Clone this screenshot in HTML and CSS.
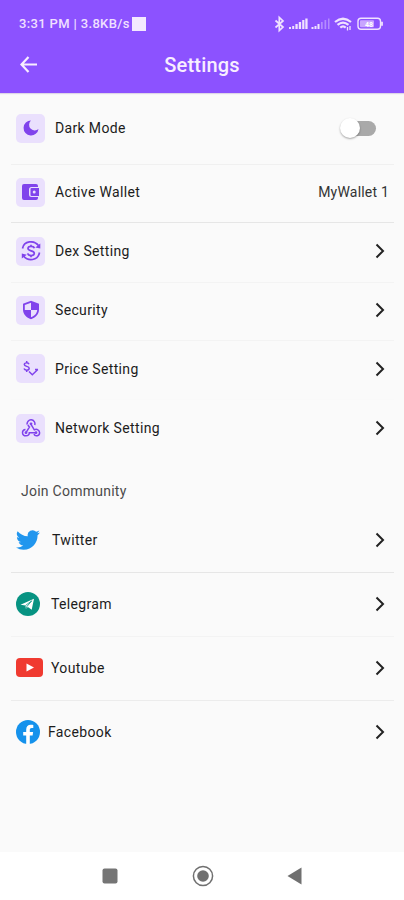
FILE: index.html
```html
<!DOCTYPE html>
<html lang="en">
<head>
    <meta charset="UTF-8">
    <meta name="viewport" content="width=device-width, initial-scale=1.0">
    <title>Settings</title>
    <link rel="stylesheet" href="styles.css">
</head>
<body>

    <div class="header">
        <div class="status-bar">
            <span class="time">3:31 PM | 3.8KB/s</span>
            <span class="square"></span>
            <svg class="status-icons" width="110" height="18" viewBox="0 0 110 18">
                <g fill="none" stroke="#f0e2ff" stroke-width="1.7">
                    <path d="M1.500 5.500l7.500 6.500-3.700 3.500V2.500L9 6l-7.500 6.500"/>
                </g>
                <g fill="#f0e2ff">
                    <path d="M15 12h2v2h-2zM18.200 11h2v3h-2zM21.400 9h2.300v5h-2.300zM24.800 7h2.300v7h-2.300zM28.200 5h2.200v9h-2.200zM31.300 3.500h2.300V14h-2.300z"/>
                    <path d="M37.500 12h2v2h-2zM40.500 11h2v3h-2zM43.500 9h2v5h-2z"/>
                    <path opacity=".4" d="M47 7h1.700v7H47zM50.500 5h1.700v9h-1.700zM54 3.500h1.500V14H54z"/>
                </g>
                <g fill="none" stroke="#f0e2ff" stroke-width="2.2">
                    <path d="M61 7q8-6.500 16 0M63.500 9.800q5.500-4.500 11 0M66.300 12.600q2.700-2.400 5.400 0"/>
                    <path d="M73.500 12v3.500M76 11v4" stroke-width="1.300"/>
                </g>
                <rect x="84" y="3.200" width="22.500" height="11" rx="3" fill="none" stroke="#f0e2ff" stroke-width="1.400"/>
                <path d="M108 6.800v4" stroke="#f0e2ff" stroke-width="1.800"/>
                <rect x="86" y="5.200" width="14" height="7" rx="1" fill="#c9a6ff"/>
                <text class="battery" x="91" y="11.700">48</text>
            </svg>
        </div>
        <div class="title-bar">
            <svg class="back" width="20" height="20" viewBox="0 0 20 20">
                <path d="M18 9.500H3M9.500 2L2.500 9.500l7 7.500"/>
            </svg>
            <h1>Settings</h1>
        </div>
    </div>

    <div class="content">
        <div class="row dark-mode">
            <span class="tile">
                <svg width="18" height="18" viewBox="0 0 18 18"><path fill="#8043ec" d="M9 1.500A7.500 7.500 0 1 0 16.500 10 4.800 4.800 0 1 1 9 1.500z"/></svg>
            </span>
            <span class="label">Dark Mode</span>
            <span class="switch"><span class="knob"></span></span>
        </div>
        <div class="row wallet">
            <span class="tile">
                <svg width="20" height="18" viewBox="0 0 20 18">
                    <path fill="#8043ec" d="M3 1h12a2 2 0 0 1 2 2v1h-6.500A2.500 2.500 0 0 0 8 6.500v5a2.500 2.500 0 0 0 2.500 2.500H17v1a2 2 0 0 1-2 2H3a2 2 0 0 1-2-2V3a2 2 0 0 1 2-2z"/>
                    <path fill="#8043ec" fill-rule="evenodd" d="M10.500 5H18v8h-7.500a1 1 0 0 1-1-1V6a1 1 0 0 1 1-1zm2.700 2.500a1.500 1.500 0 1 0 0 3 1.500 1.500 0 1 0 0-3z"/>
                </svg>
            </span>
            <span class="label">Active Wallet</span>
            <span class="value">MyWallet 1</span>
        </div>
        <div class="row dex">
            <span class="tile">
                <svg width="20" height="20" viewBox="0 0 20 20">
                    <g fill="none" stroke="#8043ec" stroke-width="1.700">
                        <path d="M1.500 7.500C3 -.5 13-1 17.500 4.500M18.500 11.500C17 20 7 20.500 2.500 15"/>
                        <path d="M13.300 7.300C12.500 4.800 7 4.800 7 7.500 7 10.500 13.300 9.200 13.300 12.300 13.300 15.200 7.200 15.200 6.700 12.400M10 3.800V5.500M10 14.500v1.700"/>
                    </g>
                    <path fill="#8043ec" d="M19.300 2.500V7.500L14.300 6.500zM.8 17.500v-5L5.800 13.800z"/>
                </svg>
            </span>
            <span class="label">Dex Setting</span>
            <svg class="arrow" viewBox="0 0 10 16"><path d="M1.500 1.500L8 8l-6.500 6.500"/></svg>
        </div>
        <div class="row security">
            <span class="tile">
                <svg width="18" height="20" viewBox="0 0 18 20">
                    <path fill="#8043ec" fill-rule="evenodd" d="M9 .8l8 3V9.500c0 4.500-3.400 8.300-8 9.700-4.600-1.400-8-5.200-8-9.700V3.800zM9 2.700L2.800 5v5H9zM9 10v7.300c3.500-1.200 6-4.100 6.200-7.300z"/>
                </svg>
            </span>
            <span class="label">Security</span>
            <svg class="arrow" viewBox="0 0 10 16"><path d="M1.500 1.500L8 8l-6.500 6.500"/></svg>
        </div>
        <div class="row price">
            <span class="tile">
                <svg width="18" height="18" viewBox="0 0 18 18">
                    <g fill="none" stroke="#8043ec" stroke-width="1.500">
                        <path d="M7 4.300C6.300 2.300 2.300 2.400 2.300 4.600 2.300 6.900 7.200 5.800 7.200 8.300 7.200 10.700 2.700 10.700 2 8.500M4.700 1v1.500M4.700 10v2"/>
                        <path d="M7 11.500l3.300 3.300 5.500-5.300M13 9.500h3"/>
                    </g>
                </svg>
            </span>
            <span class="label">Price Setting</span>
            <svg class="arrow" viewBox="0 0 10 16"><path d="M1.500 1.500L8 8l-6.500 6.500"/></svg>
        </div>
        <div class="row network">
            <span class="tile">
                <svg width="20" height="18" viewBox="0 0 20 18">
                    <g fill="none" stroke="#8043ec" stroke-width="1.500">
                        <path d="M6.200 5.500a3.900 3.900 0 1 1 7.500.5M10 5.300l3.300 5.500c2.500-1.300 5.300.3 5.300 2.900 0 3.300-4.300 4.300-5.700 1.500M14.500 13.700H8.300c0 4-6.800 4.300-6.800 0 0-2 1.500-3.200 3-3.300M7 5.800c.3 1.200 1 1.800 1.500 2.200L5 13.700"/>
                    </g>
                    <g fill="#8043ec"><circle cx="10" cy="4.800" r="1.400"/><circle cx="5" cy="13.700" r="1.400"/><circle cx="15" cy="13.700" r="1.400"/></g>
                </svg>
            </span>
            <span class="label">Network Setting</span>
            <svg class="arrow" viewBox="0 0 10 16"><path d="M1.500 1.500L8 8l-6.500 6.500"/></svg>
        </div>

        <h2>Join Community</h2>

        <div class="row social twitter">
            <svg width="24" height="24" viewBox="0 0 24 24"><path fill="#2196ee" d="M23.950 4.570a10 10 0 0 1-2.820.770 4.960 4.960 0 0 0 2.160-2.720c-.950.550-2 .950-3.120 1.180a4.920 4.920 0 0 0-8.380 4.480C7.690 8.090 4.070 6.130 1.640 3.160a4.920 4.920 0 0 0 1.520 6.570 4.900 4.900 0 0 1-2.230-.610v.060c0 2.380 1.700 4.370 3.950 4.820a5 5 0 0 1-2.210.090 4.940 4.940 0 0 0 4.600 3.420A9.870 9.870 0 0 1 0 19.540a13.990 13.990 0 0 0 7.550 2.210c9.050 0 14-7.500 14-13.980 0-.210 0-.420-.020-.630a9.940 9.940 0 0 0 2.420-2.570z"/></svg>
            <span class="label">Twitter</span>
            <svg class="arrow" viewBox="0 0 10 16"><path d="M1.500 1.500L8 8l-6.500 6.500"/></svg>
        </div>
        <div class="row social telegram">
            <svg width="24" height="24" viewBox="0 0 24 24">
                <circle cx="12" cy="12" r="12" fill="#079382"/>
                <path fill="#fff" d="M4.500 12.800L18 6.800l-2.300 11-3.800-2.700-2 1.900-.4-3.500-5-.7z"/>
                <path fill="none" stroke="#079382" stroke-width=".8" d="M9.500 13.500l6.300-4.700-4.800 5.600-1 2.500"/>
            </svg>
            <span class="label">Telegram</span>
            <svg class="arrow" viewBox="0 0 10 16"><path d="M1.500 1.500L8 8l-6.500 6.500"/></svg>
        </div>
        <div class="row social youtube">
            <svg width="27" height="19" viewBox="0 0 27 19">
                <rect width="27" height="19" rx="4" fill="#f03a30"/>
                <path fill="#fff" d="M10.500 5.500l7.500 4-7.500 4z"/>
            </svg>
            <span class="label">Youtube</span>
            <svg class="arrow" viewBox="0 0 10 16"><path d="M1.500 1.500L8 8l-6.500 6.500"/></svg>
        </div>
        <div class="row social facebook">
            <svg width="24" height="24" viewBox="0 0 24 24">
                <circle cx="12" cy="12" r="12" fill="#1592ec"/>
                <path fill="#fff" d="M10.200 24v-8.500h-3V12h3V9.400c0-3 1.800-4.700 4.500-4.700 1.300 0 2.600.2 2.600.2v3h-1.500c-1.500 0-2 .9-2 1.900V12h3.300l-.5 3.500h-2.800V24z"/>
            </svg>
            <span class="label">Facebook</span>
            <svg class="arrow" viewBox="0 0 10 16"><path d="M1.500 1.500L8 8l-6.500 6.500"/></svg>
        </div>
    </div>

    <div class="nav-bar">
        <svg width="16" height="16" viewBox="0 0 16 16"><rect x=".5" y=".5" width="15" height="15" rx="2" fill="#757575"/></svg>
        <svg width="22" height="22" viewBox="0 0 22 22">
            <circle cx="11" cy="11" r="9.600" fill="none" stroke="#707070" stroke-width="1.500"/>
            <circle cx="11" cy="11" r="5.800" fill="#707070"/>
        </svg>
        <svg width="15" height="18" viewBox="0 0 15 18"><path fill="#707070" d="M14.500.5v17L.5 9z"/></svg>
    </div>

</body>
</html>
```
FILE: styles.css
```css
* {
    box-sizing: border-box;
}

body {
    display: flex;
    flex-direction: column;
    height: 900px;
    margin: 0;
    font-family: Roboto, sans-serif;
    background-color: #fafafa;
    color: #1c1c1c;
}

svg {
    display: block;
    flex-shrink: 0;
}

.header {
    height: 93px;
    background-color: #8c52ff;
    color: #f8eeff;
    box-shadow: 0 1px 1px #ddd5e8;
}

.status-bar {
    display: flex;
    align-items: center;
    height: 37px;
    padding: 10px 20px 0 19px;
}

.time {
    font-size: 13px;
    font-weight: 500;
    letter-spacing: 0.35px;
    white-space: nowrap;
    color: #f0e0ff;
}

.square {
    width: 14px;
    height: 14px;
    margin-left: 2px;
    background-color: #f3e8ff;
}

.status-icons {
    margin-left: auto;
}

.battery {
    font-size: 7px;
    font-weight: 700;
    fill: #fff;
}

.title-bar {
    display: grid;
    grid-template-columns: 20px 1fr 20px;
    align-items: center;
    height: 56px;
    padding: 0 19px 0 19px;
}

.back {
    fill: none;
    stroke: #f8eeff;
    stroke-width: 2.2;
}

h1 {
    margin: 0;
    font-size: 20px;
    font-weight: 500;
    letter-spacing: 0.2px;
    text-align: center;
}

.content {
    flex: 1;
}

.row {
    display: flex;
    align-items: center;
    height: 59px;
    margin: 0 10px 0 11px;
    padding: 0 9px 3px 5px;
    border-bottom: 1px solid #f3f3f3;
}

.tile {
    display: flex;
    justify-content: center;
    align-items: center;
    width: 29px;
    height: 29px;
    margin-right: 10px;
    border-radius: 5px;
    background-color: #eae0fd;
}

.label {
    font-size: 14px;
    font-weight: 400;
    letter-spacing: 0.35px;
}

.arrow {
    width: 10px;
    height: 16px;
    margin-left: auto;
    fill: none;
    stroke: #222;
    stroke-width: 2;
}

.dark-mode {
    height: 72px;
    padding-bottom: 1px;
    border-color: #f0f0f0;
}

.wallet {
    height: 58px;
    padding-right: 5px;
    border-color: #e6e6e6;
}

.dex {
    height: 60px;
}

.security {
    height: 58px;
}

.price {
    border-color: #f9f9f9;
}

.network {
    border: none;
}

.switch {
    display: flex;
    align-items: center;
    width: 34px;
    height: 15px;
    margin: 0 9px 0 auto;
    border-radius: 8px;
    background-color: #a9a9a9;
}

.knob {
    width: 20px;
    height: 20px;
    margin-left: -2px;
    border-radius: 50%;
    background-color: #fff;
    box-shadow: 0 1px 2px rgba(0, 0, 0, 0.35);
    flex-shrink: 0;
}

.value {
    margin-left: auto;
    font-size: 14px;
    letter-spacing: 0.2px;
    color: #333;
}

h2 {
    height: 50px;
    margin: 0;
    padding: 24px 0 0 21px;
    font-size: 14px;
    line-height: 16px;
    font-weight: 400;
    letter-spacing: 0.25px;
    color: #4a4a4a;
}

.social {
    height: 64px;
    padding-bottom: 2px;
}

.twitter {
    border-color: #e6e6e6;
}

.youtube {
    border-color: #ececec;
}

.twitter .label {
    margin-left: 12px;
}

.telegram .label {
    margin-left: 11px;
}

.youtube .label,
.facebook .label {
    margin-left: 8px;
}

.facebook {
    border: none;
}

.nav-bar {
    display: flex;
    justify-content: space-between;
    align-items: center;
    height: 48px;
    padding: 0 102px;
    background-color: #fff;
}
```
